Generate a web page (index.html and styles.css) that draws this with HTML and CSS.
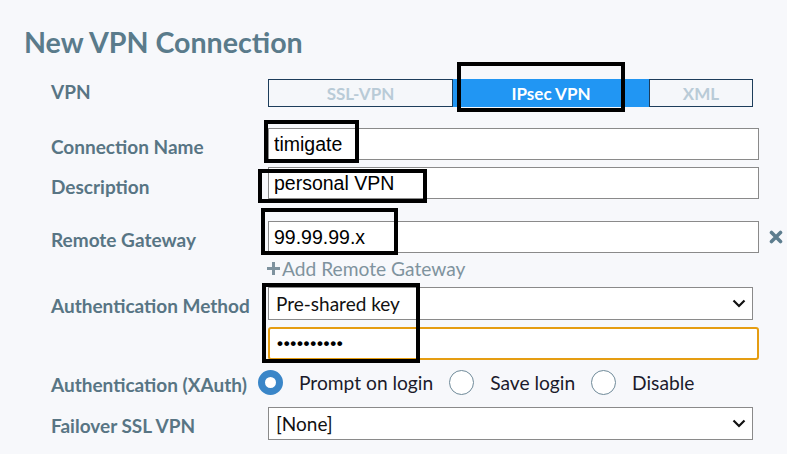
FILE: index.html
```html
<html>
   <head>
      <meta charset="UTF-8">
      <title>New VPN Connection</title>
      <link rel="stylesheet" href="styles.css">
   </head>
   <body>
      <div class="page">
         <h1 class="title">New VPN Connection</h1>
         <div class="form">
            <div class="row row--vpn">
               <span class="label label--short">VPN</span>
               <div class="seg">
                  <span class="seg__btn seg__btn--ssl">SSL-VPN</span>
                  <span class="seg__btn seg__btn--ipsec active">IPsec VPN</span>
                  <span class="seg__btn seg__btn--xml">XML</span>
               </div>
            </div>
            <div class="row row--name">
               <span class="label">Connection Name</span>
               <input class="field" type="text" value="timigate">
            </div>
            <div class="row row--desc">
               <span class="label label--low">Description</span>
               <input class="field" type="text" value="personal VPN">
            </div>
            <div class="row row--gateway">
               <span class="label">Remote Gateway</span>
               <input class="field" type="text" value="99.99.99.x">
               <span class="remove">
                  <svg width="14" height="14" viewBox="0 0 14 14"><path d="M2.5 2.5 L11.5 11.5 M11.5 2.5 L2.5 11.5" stroke="#5d7d8e" stroke-width="3.6" stroke-linecap="round"/></svg>
               </span>
            </div>
            <div class="row row--add">
               <span></span>
               <span class="add">
                  <svg width="13" height="13" viewBox="0 0 13 13"><path d="M5 0h3v5h5v3h-5v5h-3v-5h-5v-3h5z" fill="#7e929e"/></svg>Add Remote Gateway
               </span>
            </div>
            <div class="row row--auth">
               <span class="label label--select">Authentication Method</span>
               <div class="stack">
                  <div class="select">
                     <span>Pre-shared key</span>
                     <svg width="14" height="9" viewBox="0 0 14 9"><path d="M1.5 1.5 L7 7 L12.5 1.5" fill="none" stroke="#111" stroke-width="2.2"/></svg>
                  </div>
                  <div class="secret">••••••••••</div>
               </div>
            </div>
            <div class="row row--xauth">
               <span class="label label--radio">Authentication (XAuth)</span>
               <div class="radios">
                  <span class="option"><span class="radio on"></span>Prompt on login</span>
                  <span class="option"><span class="radio"></span>Save login</span>
                  <span class="option"><span class="radio"></span>Disable</span>
               </div>
            </div>
            <div class="row row--failover">
               <span class="label label--select">Failover SSL VPN</span>
               <div class="select">
                  <span>[None]</span>
                  <svg width="14" height="9" viewBox="0 0 14 9"><path d="M1.5 1.5 L7 7 L12.5 1.5" fill="none" stroke="#111" stroke-width="2.2"/></svg>
               </div>
            </div>
         </div>
         <!-- black highlight boxes drawn over the form -->
         <div class="mark mark--ipsec"></div>
         <div class="mark mark--name"></div>
         <div class="mark mark--desc"></div>
         <div class="mark mark--gateway"></div>
         <div class="mark mark--auth"></div>
      </div>
   </body>
</html>
```

FILE: styles.css
```css
* {
  box-sizing: border-box;
}
body {
    margin: 0;
    background-color: #f7f8fb;
    font-family: "Lato", "Noto Sans", sans-serif;
}
.page {
    position: relative;
    width: 787px;
    height: 454px;
    padding-top: 28px;
    overflow: hidden;
}
.title {
    margin: 0 0 0 24px;
    font-size: 28.6px;
    line-height: 29px;
    font-weight: 700;
    color: #5a7b8b;
}
.form {
    padding-left: 51px;
}
/* one line of the form: label, field, extra icon */
.row {
    display: grid;
    grid-template-columns: 217px 491px 28px;
    align-items: start;
}
.row--vpn { margin-top: 22px; }
.row--name { margin-top: 21px; }
.row--desc { margin-top: 7px; }
.row--gateway { margin-top: 22px; }
.row--add { margin-top: 4px; }
.row--auth { margin-top: 8px; }
.row--xauth { margin-top: 9px; }
.row--failover { margin-top: 12px; }

.label {
    display: flex;
    align-items: center;
    height: 32px;
    padding-top: 4px;
    font-size: 19px;
    font-weight: 700;
    color: #587584;
    white-space: nowrap;
}
.label--short {
    height: 28px;
    padding-top: 0;
    padding-bottom: 4px;
}
.label--low { padding-top: 7px; }
.label--select { height: 33px; }
.label--radio { height: 26px; }

/* segmented control */
.seg {
    display: flex;
    width: 485px;
    height: 28px;
}
.seg__btn {
    display: flex;
    align-items: center;
    justify-content: center;
    border: 1px solid #1d3d5b;
    background: #f5f7fa;
    color: #b9cbd7;
    font-size: 17px;
    font-weight: 700;
}
.seg__btn--ssl { width: 185px; }
.seg__btn--ipsec { width: 196px; }
.seg__btn--xml { width: 104px; }
.seg__btn.active {
    background: #2196f3;
    border-color: #2196f3;
    color: #fff;
}

.field {
    width: 491px;
    height: 32px;
    margin: 0;
    padding: 0 5px;
    border: 1px solid #8a8a8a;
    border-radius: 0;
    background: #fff;
    font-family: "Liberation Sans", Arial, sans-serif;
    font-size: 19.5px;
    color: #000;
    outline: none;
}
.remove {
    display: flex;
    align-items: center;
    height: 32px;
    padding-left: 10px;
}
.add {
    display: flex;
    align-items: center;
    gap: 2px;
    height: 22px;
    margin-left: -1px;
    font-size: 19.2px;
    color: #7f939e;
}

.stack {
    display: flex;
    flex-direction: column;
    gap: 7px;
}
.select {
    display: flex;
    align-items: center;
    justify-content: space-between;
    width: 485px;
    height: 33px;
    padding: 0 6px 0 7px;
    border: 1px solid #8a8a8a;
    background: #fff;
    font-size: 19px;
    color: #111;
}
.secret {
    display: flex;
    align-items: center;
    width: 491px;
    height: 33px;
    padding: 0 7px;
    border: 2px solid #e59d12;
    border-radius: 3px;
    background: #fff;
    font-family: "Liberation Sans", Arial, sans-serif;
    font-size: 17px;
    font-weight: 700;
    letter-spacing: 0.7px;
    color: #000;
}

/* radio buttons */
.radios {
    display: flex;
    align-items: center;
    height: 26px;
    margin-left: -10px;
}
.option {
    display: flex;
    align-items: center;
    gap: 16px;
    margin-right: 16px;
    font-size: 19.2px;
    color: #1b1b2b;
}
.radio {
    width: 25px;
    height: 25px;
    border-radius: 50%;
    border: 1px solid #6f8a99;
    background: #fff;
}
.radio.on {
    border: 7px solid #3a86c8;
}

/* highlight boxes */
.mark {
    position: absolute;
    border: 4px solid #000;
}
.mark--ipsec { left: 457px; top: 62px; width: 168px; height: 50px; }
.mark--name { left: 264px; top: 120px; width: 95px; height: 43px; }
.mark--desc { left: 258px; top: 169px; width: 169px; height: 34px; }
.mark--gateway { left: 261px; top: 208px; width: 137px; height: 47px; }
.mark--auth { left: 262px; top: 283px; width: 158px; height: 80px; }
```
